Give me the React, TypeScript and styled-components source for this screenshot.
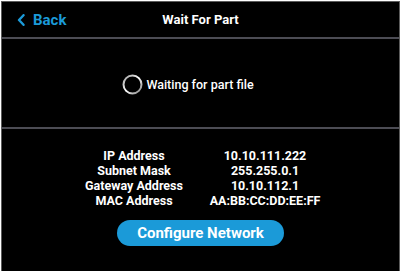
import React from "react";
import styled, { createGlobalStyle } from "styled-components";

const Global = createGlobalStyle`
  html, body { margin: 0; padding: 0; background: #ffffff; }
  body { font-family: Roboto, "Liberation Sans", Arial, sans-serif; }
  * { box-sizing: border-box; }
`;

const Frame = styled.div`
  width: 401px;
  height: 271px;
  padding: 1px 0 0 1px;
  background: #ffffff;
`;

const Screen = styled.div`
  width: 399px;
  height: 270px;
  background: #000;
  border-top: 1px solid #5c5c5c;
  border-left: 1px solid #5c5c5c;
  border-right: 1px solid #5c5c5c;
  display: flex;
  flex-direction: column;
  color: #fff;
`;

const Header = styled.div`
  height: 37px;
  flex: none;
  border-bottom: 2px solid #4c4c54;
  display: grid;
  grid-template-columns: 1fr auto 1fr;
  align-items: center;
`;

const BackButton = styled.div`
  display: flex;
  align-items: center;
  gap: 8px;
  padding-left: 15px;
  color: #1b9ad8;
  font-weight: 700;
  font-size: 15px;
`;

const Title = styled.div`
  font-weight: 700;
  font-size: 13px;
  color: #fff;
`;

const Waiting = styled.div`
  height: 90px;
  flex: none;
  border-bottom: 2px solid #4c4c54;
  display: flex;
  align-items: center;
  justify-content: center;
  gap: 3px;
  font-size: 12.5px;
  font-weight: 500;
  padding-right: 25px;
  padding-top: 2px;
`;

const Info = styled.div`
  flex: 1;
  display: flex;
  flex-direction: column;
  align-items: center;
  padding-top: 19px;
`;

const InfoGrid = styled.div`
  display: grid;
  grid-template-columns: 131px 131px;
  font-size: 12.5px;
  font-weight: 700;
  line-height: 15px;
  text-align: center;
  margin-right: 2px;
`;

const Cell = styled.div``;

const ConfigButton = styled.div`
  margin-top: 12px;
  width: 167px;
  height: 26px;
  border-radius: 13px;
  background: #1b9ad8;
  color: #fff;
  font-weight: 700;
  font-size: 15px;
  display: flex;
  align-items: center;
  justify-content: center;
`;

const Spinner = () => (
  <svg width="21" height="21" viewBox="0 0 21 21">
    <defs>
      <linearGradient id="sg" x1="0" y1="0" x2="1" y2="1">
        <stop offset="0" stopColor="#9a9a9a" />
        <stop offset="0.5" stopColor="#ffffff" />
        <stop offset="1" stopColor="#7a7a7a" />
      </linearGradient>
    </defs>
    <circle cx="10.5" cy="10.5" r="9" fill="none" stroke="url(#sg)" strokeWidth="2" />
  </svg>
);

const Chevron = () => (
  <svg width="8" height="12" viewBox="0 0 8 12">
    <path d="M6.5 1.2 L2 6 L6.5 10.8" fill="none" stroke="#1b9ad8" strokeWidth="2.4" strokeLinecap="round" strokeLinejoin="round" />
  </svg>
);

const rows: [string, string][] = [
  ["IP Address", "10.10.111.222"],
  ["Subnet Mask", "255.255.0.1"],
  ["Gateway Address", "10.10.112.1"],
  ["MAC Address", "AA:BB:CC:DD:EE:FF"],
];

export default function App() {
  return (
    <Frame>
      <Global />
      <Screen>
        <Header>
          <BackButton>
            <Chevron />
            Back
          </BackButton>
          <Title>Wait For Part</Title>
          <div />
        </Header>
        <Waiting>
          <Spinner />
          Waiting for part file
        </Waiting>
        <Info>
          <InfoGrid>
            {rows.map(([k, v]) => (
              <React.Fragment key={k}>
                <Cell>{k}</Cell>
                <Cell>{v}</Cell>
              </React.Fragment>
            ))}
          </InfoGrid>
          <ConfigButton>Configure Network</ConfigButton>
        </Info>
      </Screen>
    </Frame>
  );
}
